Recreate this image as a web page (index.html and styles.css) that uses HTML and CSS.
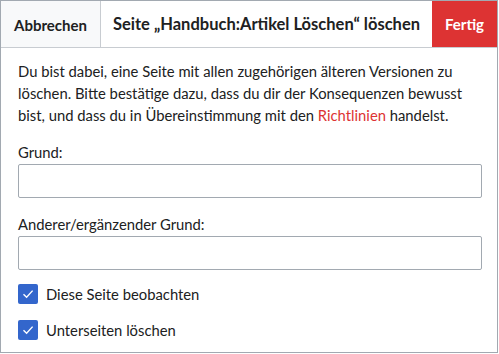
FILE: index.html
```html
<!DOCTYPE html>
<html lang="de">
<head>
<meta charset="utf-8">
<title>Seite löschen</title>
<link rel="stylesheet" href="styles.css">
</head>
<body>
<div class="dialog">
  <div class="head">
    <button class="btn-cancel">Abbrechen</button>
    <div class="title">Seite „Handbuch:Artikel Löschen“ löschen</div>
    <button class="btn-done">Fertig</button>
  </div>
  <div class="content">
    <p class="intro">Du bist dabei, eine Seite mit allen zugehörigen älteren Versionen zu löschen. Bitte bestätige dazu, dass du dir der Konsequenzen bewusst bist, und dass du in Übereinstimmung mit den <a href="#" class="link">Richtlinien</a> handelst.</p>
    <div class="field">
      <label class="label">Grund:</label>
      <input class="text" type="text">
    </div>
    <div class="field">
      <label class="label">Anderer/ergänzender Grund:</label>
      <input class="text" type="text">
    </div>
    <label class="check">
      <span class="box"><svg width="14" height="14" viewBox="0 0 14 14"><path d="M2.5 7.3 L5.6 10.3 L11.6 3.6" fill="none" stroke="#fff" stroke-width="1.4"/></svg></span>
      <span>Diese Seite beobachten</span>
    </label>
    <label class="check">
      <span class="box"><svg width="14" height="14" viewBox="0 0 14 14"><path d="M2.5 7.3 L5.6 10.3 L11.6 3.6" fill="none" stroke="#fff" stroke-width="1.4"/></svg></span>
      <span>Unterseiten löschen</span>
    </label>
  </div>
</div>
</body>
</html>
```
FILE: styles.css
```css
* { box-sizing: border-box; }
html, body { margin: 0; padding: 0; background: #fff; }
body {
  font-family: Lato, "Noto Sans", sans-serif;
  color: #202122;
  font-size: 14.8px;
}
.dialog {
  width: 498px;
  height: 353px;
  border: 1px solid #a2a9b1;
  background: #fff;
}
.head {
  display: flex;
  height: 47px;
  border-bottom: 1px solid #c8ccd1;
}
.btn-cancel, .btn-done {
  font-family: inherit;
  font-weight: bold;
  font-size: 15px;
  border: 0;
  margin: 0;
  padding: 0;
  cursor: pointer;
}
.btn-cancel {
  width: 100px;
  background: #f8f9fa;
  color: #202122;
  border-right: 1px solid #c8ccd1;
  padding-top: 1px;
}
.btn-done {
  width: 65px;
  background: #dd3333;
  color: #fff;
  font-size: 15px;
}
.title {
  flex: 1;
  display: flex;
  align-items: center;
  justify-content: center;
  font-weight: bold;
  font-size: 16.5px;
}
.content {
  padding: 12px 15px 0 17px;
}
.intro {
  margin: 0;
  line-height: 22px;
}
.link { color: #dd3333; text-decoration: none; }
.field {
  display: flex;
  flex-direction: column;
  margin-top: 15px;
}
.label {
  line-height: 22px;
  margin-bottom: 1px;
}
.text {
  height: 34px;
  width: 100%;
  border: 1px solid #a2a9b1;
  border-radius: 2px;
  background: #fff;
  font-family: inherit;
  font-size: 14px;
}
.check {
  display: flex;
  align-items: center;
  gap: 8px;
  line-height: 22px;
  margin-top: 13px;
}
.check + .check { margin-top: 14px; }
.box {
  width: 20px;
  height: 20px;
  border-radius: 2px;
  background: #3366cc;
  display: flex;
  align-items: center;
  justify-content: center;
  flex: none;
}
```
